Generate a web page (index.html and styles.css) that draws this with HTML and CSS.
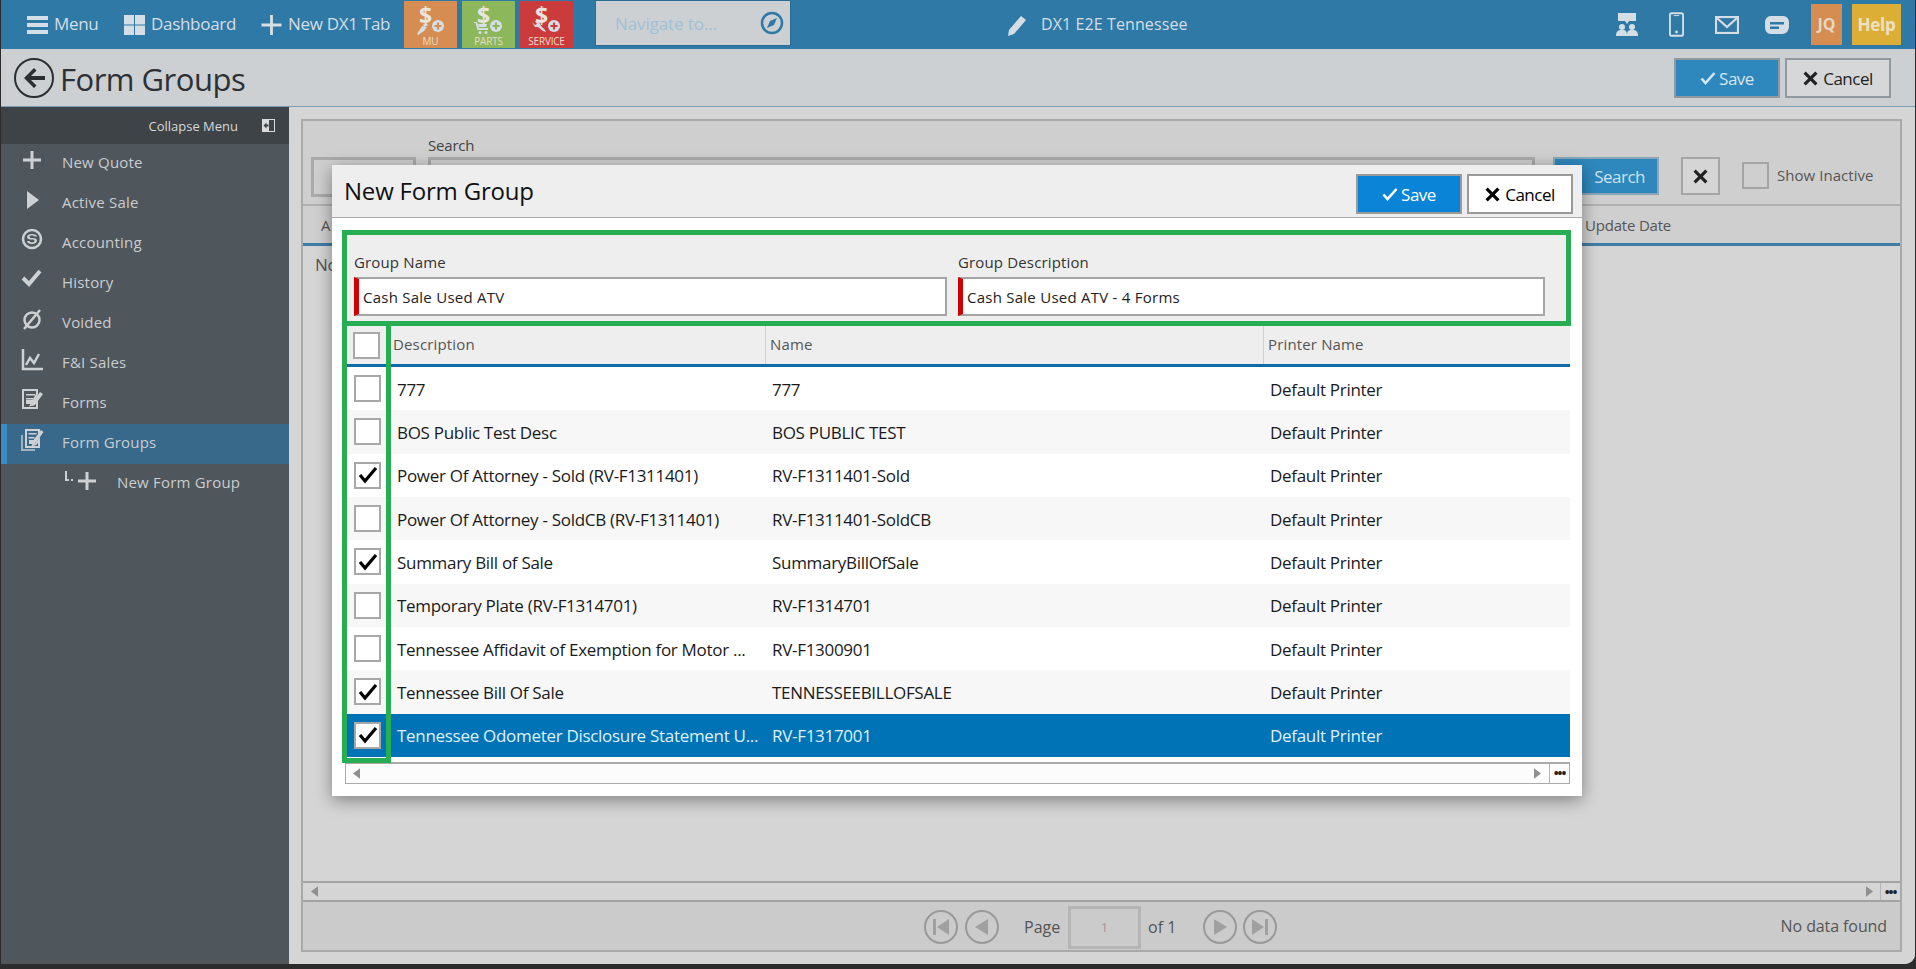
FILE: index.html
```html
<!DOCTYPE html>
<html lang="en">
<head>
<meta charset="utf-8">
<title>Form Groups</title>
<link rel="stylesheet" href="styles.css">
</head>
<body>
<div class="app">
  <header class="topbar">
    <div class="nav nav-menu"><svg class="ic21" viewBox="0 0 21 20"><path d="M0 1h21v4H0zM0 8h21v4H0zM0 15h21v4H0z"/></svg><span>Menu</span></div>
    <div class="nav nav-dash"><svg class="ic21" viewBox="0 0 21 20"><path d="M0 0h10v9.500H0zM11 0h10v9.500H11zM0 10.500h10V20H0zM11 10.500h10V20H11z"/></svg><span>Dashboard</span></div>
    <div class="nav nav-tab"><svg class="ic21" viewBox="0 0 21 21"><path d="M9 0h3v9h9v3h-9v9H9v-9H0V9h9z"/></svg><span>New DX1 Tab</span></div>
    <div class="tile tile-mu"><svg class="tile-art" viewBox="0 12 36 20"><path class="art" d="M3 26l5-8 5 1-3 4-6 4zM9 16.500l4-1 1 2-4 1z"/><circle class="art" cx="24" cy="18" r="6"/><path class="plus" d="M23 14.500h2V17h2.500v2H25v2.500h-2V19h-2.500v-2H23z"/></svg><span class="dollar">$</span><span class="tile-label">MU</span></div>
    <div class="tile tile-parts"><svg class="tile-art" viewBox="0 12 36 20"><path class="art" d="M2 14h3l2 6h9v2H5.500l-2-7H2zM6 16h9l-1 3H7z"/><circle class="art" cx="8" cy="24.500" r="1.500"/><circle class="art" cx="14" cy="24.500" r="1.500"/><circle class="art" cx="24" cy="18" r="6"/><path class="plus" d="M23 14.500h2V17h2.500v2H25v2.500h-2V19h-2.500v-2H23z"/></svg><span class="dollar">$</span><span class="tile-label">PARTS</span></div>
    <div class="tile tile-service"><svg class="tile-art" viewBox="0 12 36 20"><path class="art" d="M2 14l3 3 2-1-2-3 3 0 2 3 1 2 4 4 1 2-3-1-5-4-3 0z"/><circle class="art" cx="24" cy="18" r="6"/><path class="plus" d="M23 14.500h2V17h2.500v2H25v2.500h-2V19h-2.500v-2H23z"/></svg><span class="dollar">$</span><span class="tile-label">SERVICE</span></div>
    <div class="navto"><span class="navto-text">Navigate to...</span><svg class="compass" viewBox="0 0 24 24"><circle cx="12" cy="12" r="10" fill="none" stroke-width="2.500"/><path class="needle" d="M17 7l-3 7-7 3 3-7z"/></svg></div>
    <div class="dealer"><svg class="pencil" viewBox="0 0 22 22"><path d="M15 2l5 4L8 20l-6 2 1-6z"/></svg><span>DX1 E2E Tennessee</span></div>
    <div class="top-right">
      <svg class="ic-top" viewBox="0 0 24 24"><path d="M3 0h18v8H14l-2 3-2-3H3z"/><circle cx="7" cy="14" r="3"/><circle cx="17" cy="14" r="3"/><path d="M1 23c0-5 2-6 6-6s5 1 5 6zM12 23c0-5 1-6 5-6s6 1 6 6z"/></svg>
      <svg class="ic-phone" viewBox="0 0 16 26"><rect x="1" y="1" width="14" height="24" rx="2" fill="none" stroke-width="2"/><circle cx="8" cy="21" r="1.500"/><path d="M5 3h6v1H5z"/></svg>
      <svg class="ic-mail" viewBox="0 0 24 18"><rect x="1" y="1" width="22" height="16" fill="none" stroke-width="2"/><path d="M2 2l10 9 10-9" fill="none" stroke-width="2.500"/></svg>
      <svg class="ic-chat" viewBox="0 0 24 18"><path class="chat-body" d="M6 0h12c4 0 6 3 6 7v3c0 5-3 8-7 8H6c-4 0-6-3-6-7V7c0-4 2-7 6-7z"/><path class="chat-lines" d="M5 6h14v2.500H5zM5 10.500h9V13H5z"/></svg>
      <div class="user-tile">JQ</div>
      <div class="help-tile">Help</div>
    </div>
  </header>

  <div class="subheader">
    <svg class="back" viewBox="0 0 40 40"><circle cx="20" cy="20" r="19" fill="none" stroke="#2b2f33" stroke-width="2"/><path d="M20 10l2.500 2.500L17 18h14v4H17l5.500 5.500L20 30 10 20z" fill="#2b2f33"/></svg>
    <h1 class="page-title">Form Groups</h1>
    <div class="sub-actions">
      <button class="btn btn-save-dim"><svg class="ic-check" viewBox="0 0 16 14"><path d="M1.500 7.500l4 4.500L14.500 2" fill="none" stroke="#d5e6f1" stroke-width="2.600"/></svg>Save</button>
      <button class="btn btn-cancel-dim"><svg class="ic-x" viewBox="0 0 14 14"><path d="M1.500 1.500l11 11M12.500 1.500l-11 11" fill="none" stroke="#222" stroke-width="3"/></svg>Cancel</button>
    </div>
  </div>

  <div class="body-row">
    <aside class="sidebar">
      <div class="collapse"><span>Collapse Menu</span><svg class="collapse-ic" viewBox="0 0 13 13"><rect width="13" height="13" fill="#d8dadb"/><rect x="7" y="1" width="5" height="11" fill="#3e4347"/><path d="M1.500 6.500l3-3v2h2v2h-2v2z" fill="#3e4347"/></svg></div>
      <div class="side-item"><svg class="side-ic" viewBox="0 0 24 24"><path d="M10.500 3h3v7.500H21v3h-7.500V21h-3v-7.500H3v-3h7.500z"/></svg><span>New Quote</span></div>
      <div class="side-item"><svg class="side-ic" viewBox="0 0 24 24"><path d="M7 3l12 9-12 9z"/></svg><span>Active Sale</span></div>
      <div class="side-item"><svg class="side-ic" viewBox="0 0 24 24"><circle cx="12" cy="11" r="9" fill="none" stroke="#cdd1d3" stroke-width="2.500"/><path d="M7 9c0-2 2-3 5-3s5 1 5 2.500h-2.500c-.5-.7-1.400-1-2.500-1-1.500 0-2.500.5-2.500 1.200S10.500 10 12 10c3 0 5 .8 5 2.500S15 16 12 16s-5-1-5-3h2.500c.3.800 1.200 1.300 2.500 1.300 1.500 0 2.500-.5 2.500-1.500S13.500 11.500 12 11.500c-3 0-5-.5-5-2.500z"/></svg><span>Accounting</span></div>
      <div class="side-item"><svg class="side-ic" viewBox="0 0 24 24"><path d="M3 10l6 6L20 3" fill="none" stroke="#cdd1d3" stroke-width="4"/></svg><span>History</span></div>
      <div class="side-item"><svg class="side-ic" viewBox="0 0 24 24"><circle cx="12" cy="12" r="7.500" fill="none" stroke="#cdd1d3" stroke-width="2.500"/><path d="M4 21L20 2" stroke="#cdd1d3" stroke-width="2.500"/></svg><span>Voided</span></div>
      <div class="side-item"><svg class="side-ic" viewBox="0 0 24 24"><path d="M3 1v20h20" fill="none" stroke="#cdd1d3" stroke-width="2.500"/><path d="M6 17l4-7 4 5 5-9" fill="none" stroke="#cdd1d3" stroke-width="2.500"/></svg><span>F&amp;I Sales</span></div>
      <div class="side-item"><svg class="side-ic" viewBox="0 0 24 24"><path d="M3 2h14v4l-4 7H7v2h5l-1 2 3-1 3-5v9H3z" fill="none" stroke="#cdd1d3" stroke-width="2"/><path d="M6 6h9v1.500H6zM6 10h7v1.500H6zM6 14h5v1.500H6zM20 4l3 2-8 11-3 1 0-3z"/></svg><span>Forms</span></div>
      <div class="side-item side-active"><svg class="side-ic" viewBox="0 0 24 24"><path d="M1 7h2v14h12v2H1z" opacity=".7"/><path d="M6 2h13v5l-4 6h-5v2h4l-1 2 3-1 3-4v7H6z" fill="none" stroke="#cdd1d3" stroke-width="2"/><path d="M8.500 5h8v1.500h-8zM8.500 9h6v1.500h-6zM21 2l2.500 2-7 10-3 1 0-3z"/></svg><span>Form Groups</span></div>
      <div class="side-item side-sub"><svg class="sub-l" viewBox="0 0 8 10"><path d="M0 0h2v8h2v2H0zM6 8h2v2H6z"/></svg><svg class="sub-plus" viewBox="0 0 18 18"><path d="M7.500 0h3v7.500H18v3h-7.500V18h-3v-7.500H0v-3h7.500z"/></svg><span>New Form Group</span></div>
    </aside>

    <main class="main">
      <section class="panel">
        <div class="toolbar">
          <div class="combo"></div>
          <div class="search-field"><label class="search-label">Search</label><div class="search-input"></div></div>
          <button class="search-btn">Search</button>
          <button class="clear-btn"><svg class="ic-x" viewBox="0 0 14 14"><path d="M1.500 1.500l11 11M12.500 1.500l-11 11" fill="none" stroke="#222" stroke-width="3"/></svg></button>
          <div class="inactive"><span class="inactive-box"></span><span>Show Inactive</span></div>
        </div>
        <div class="panel-head"><span>A</span><span class="update-date">Update Date</span></div>
        <div class="panel-content"><span>No</span></div>
        <div class="panel-scroll">
          <svg class="arrow" viewBox="0 0 8 12"><path d="M8 0v12L0 6z"/></svg>
          <svg class="arrow arrow-r" viewBox="0 0 8 12"><path d="M0 0v12l8-6z"/></svg>
          <span class="more">&#8226;&#8226;&#8226;</span>
        </div>
        <div class="pager">
          <div class="pager-mid">
            <svg class="pg" viewBox="0 0 34 34"><circle cx="17" cy="17" r="16"/><path class="pg-fill" d="M9 9h3v16H9zM25 9v16L13 17z"/></svg>
            <svg class="pg pg-prev" viewBox="0 0 34 34"><circle cx="17" cy="17" r="16"/><path class="pg-fill" d="M23 9v16L10 17z"/></svg>
            <span class="pg-page">Page</span>
            <span class="pg-input">1</span>
            <span class="pg-of">of 1</span>
            <svg class="pg pg-next" viewBox="0 0 34 34"><circle cx="17" cy="17" r="16"/><path class="pg-fill" d="M11 9v16l13-8z"/></svg>
            <svg class="pg pg-last" viewBox="0 0 34 34"><circle cx="17" cy="17" r="16"/><path class="pg-fill" d="M9 9v16l12-8zM22 9h3v16h-3z"/></svg>
          </div>
          <span class="pg-status">No data found</span>
        </div>
      </section>
    </main>
  </div>

  <div class="modal">
    <div class="modal-head">
      <h2 class="modal-title">New Form Group</h2>
      <div class="modal-actions">
        <button class="btn btn-save"><svg class="ic-check" viewBox="0 0 16 14"><path d="M1.500 7.500l4 4.500L14.500 2" fill="none" stroke="#fff" stroke-width="2.600"/></svg>Save</button>
        <button class="btn btn-cancel"><svg class="ic-x" viewBox="0 0 14 14"><path d="M1.500 1.500l11 11M12.500 1.500l-11 11" fill="none" stroke="#000" stroke-width="3"/></svg>Cancel</button>
      </div>
    </div>
    <div class="modal-body">
      <div class="form-box">
        <div class="field field-name"><label class="field-label">Group Name</label><div class="field-input">Cash Sale Used ATV</div></div>
        <div class="field field-desc"><label class="field-label">Group Description</label><div class="field-input">Cash Sale Used ATV - 4 Forms</div></div>
      </div>
      <div class="grid">
        <div class="grid-head">
          <div class="cell-check"><span class="box box-head"></span></div>
          <div class="head-cell">Description</div>
          <div class="head-cell">Name</div>
          <div class="head-cell head-last">Printer Name</div>
        </div>
        <div class="grid-row"><div class="cell-check"><span class="box"></span></div><div class="cell">777</div><div class="cell">777</div><div class="cell">Default Printer</div></div>
        <div class="grid-row alt"><div class="cell-check"><span class="box"></span></div><div class="cell">BOS Public Test Desc</div><div class="cell">BOS PUBLIC TEST</div><div class="cell">Default Printer</div></div>
        <div class="grid-row"><div class="cell-check"><span class="box"><svg class="tick" viewBox="0 0 20 18"><path d="M2 9l5 6L18 2" fill="none" stroke="#000" stroke-width="3.200"/></svg></span></div><div class="cell">Power Of Attorney - Sold (RV-F1311401)</div><div class="cell">RV-F1311401-Sold</div><div class="cell">Default Printer</div></div>
        <div class="grid-row alt"><div class="cell-check"><span class="box"></span></div><div class="cell">Power Of Attorney - SoldCB (RV-F1311401)</div><div class="cell">RV-F1311401-SoldCB</div><div class="cell">Default Printer</div></div>
        <div class="grid-row"><div class="cell-check"><span class="box"><svg class="tick" viewBox="0 0 20 18"><path d="M2 9l5 6L18 2" fill="none" stroke="#000" stroke-width="3.200"/></svg></span></div><div class="cell">Summary Bill of Sale</div><div class="cell">SummaryBillOfSale</div><div class="cell">Default Printer</div></div>
        <div class="grid-row alt"><div class="cell-check"><span class="box"></span></div><div class="cell">Temporary Plate (RV-F1314701)</div><div class="cell">RV-F1314701</div><div class="cell">Default Printer</div></div>
        <div class="grid-row"><div class="cell-check"><span class="box"></span></div><div class="cell">Tennessee Affidavit of Exemption for Motor ...</div><div class="cell">RV-F1300901</div><div class="cell">Default Printer</div></div>
        <div class="grid-row alt"><div class="cell-check"><span class="box"><svg class="tick" viewBox="0 0 20 18"><path d="M2 9l5 6L18 2" fill="none" stroke="#000" stroke-width="3.200"/></svg></span></div><div class="cell">Tennessee Bill Of Sale</div><div class="cell">TENNESSEEBILLOFSALE</div><div class="cell">Default Printer</div></div>
        <div class="grid-row selected"><div class="cell-check"><span class="box"><svg class="tick" viewBox="0 0 20 18"><path d="M2 9l5 6L18 2" fill="none" stroke="#000" stroke-width="3.200"/></svg></span></div><div class="cell">Tennessee Odometer Disclosure Statement U...</div><div class="cell">RV-F1317001</div><div class="cell">Default Printer</div></div>
        <div class="grid-scroll">
          <svg class="arrow" viewBox="0 0 8 12"><path d="M8 0v12L0 6z"/></svg>
          <svg class="arrow arrow-r" viewBox="0 0 8 12"><path d="M0 0v12l8-6z"/></svg>
          <span class="more">&#8226;&#8226;&#8226;</span>
        </div>
      </div>
      <div class="green-column"></div>
    </div>
  </div>
</div>
</body>
</html>
```

FILE: styles.css
```css
* { box-sizing: border-box; }
html, body { margin: 0; padding: 0; height: 969px; overflow: hidden; }
body { background: #2c2c2c; font-family: "Open Sans", "Noto Sans", sans-serif; color: #222; }
h1, h2 { margin: 0; font-weight: 400; }
button { font-family: inherit; cursor: default; }
svg { display: block; flex: none; }

.app { position: relative; margin-left: 1px; width: 1914px; height: 964px; display: flex; flex-direction: column; overflow: hidden; border-radius: 0 0 10px 0; background: #d5d5d5; }

/* top bar */
.topbar { height: 49px; flex: none; background: #2f79a7; display: flex; align-items: center; padding-left: 26px; color: #d5dee4; font-size: 17px; letter-spacing: -0.3px; }
.topbar svg path, .topbar svg circle, .topbar svg rect { fill: #d5dee4; stroke: #d5dee4; stroke-width: 0; }
.nav { display: flex; align-items: center; gap: 6px; white-space: nowrap; }
.nav span { margin-top: -2px; }
.ic21 { width: 21px; height: 20px; }
.nav-menu { width: 97px; }
.nav-dash { width: 137px; }
.nav-tab { width: 143px; }
.tile { position: relative; width: 53px; height: 47px; margin-right: 5px; color: #e9dccb; text-align: center; }
.tile-mu { background: #d68d52; }
.tile-parts { background: #8db75b; }
.tile-service { background: #cc3b3b; margin-right: 23px; }
.dollar { position: absolute; left: 15px; top: 1px; z-index: 1; font-size: 23px; line-height: 26px; font-weight: 700; letter-spacing: 0; color: #e8e4de; }
.tile-art { position: absolute; left: 10px; top: 19px; width: 36px; height: 20px; }
.topbar .tile-art .plus { fill: #8a8a8a; }
.tile-mu .tile-art .plus { fill: #d68d52; }
.tile-parts .tile-art .plus { fill: #8db75b; }
.tile-service .tile-art .plus { fill: #cc3b3b; }
.tile-label { position: absolute; left: 0; right: 0; bottom: 0; font-size: 10px; line-height: 13px; letter-spacing: -0.2px; }

.navto { width: 194px; height: 44px; margin-top: -3px; background: #ccd0d3; display: flex; align-items: center; justify-content: space-between; padding: 0 6px 0 19px; box-shadow: 0 0 0 1px #2a6a93; }
.navto-text { color: #a0c0d7; font-size: 17px; letter-spacing: -0.1px; }
.topbar .compass { width: 24px; height: 24px; }
.topbar .compass circle { fill: none; stroke: #2f79a7; stroke-width: 2.500; }
.topbar .compass .needle { fill: #2f79a7; }

.dealer { margin-left: 216px; display: flex; align-items: center; gap: 13px; font-size: 16px; letter-spacing: 0.1px; white-space: nowrap; }
.dealer span { margin-top: -2px; }
.pencil { width: 22px; height: 22px; }
.top-right { margin-left: auto; display: flex; align-items: center; padding-right: 14px; }
.ic-top { width: 24px; height: 24px; margin-right: 30px; }
.ic-phone { width: 15px; height: 25px; margin-right: 31px; }
.topbar .ic-phone rect { fill: none; stroke-width: 2; }
.ic-mail { width: 24px; height: 18px; margin-right: 26px; }
.topbar .ic-mail rect, .topbar .ic-mail path { fill: none; stroke-width: 2.200; }
.ic-chat { width: 24px; height: 18px; margin-right: 22px; }
.topbar .ic-chat .chat-lines { fill: #2f79a7; }
.user-tile { width: 31px; height: 41px; background: #d68d52; color: #e6d7c5; font-weight: 700; font-size: 16px; line-height: 41px; text-align: center; margin-right: 10px; letter-spacing: 0; }
.help-tile { width: 49px; height: 41px; background: #dcae36; color: #ece2c3; font-weight: 700; font-size: 17px; line-height: 41px; text-align: center; letter-spacing: -0.2px; }

/* sub header */
.subheader { height: 58px; flex: none; background: #ccd0d3; border-bottom: 1px solid #7d9db4; display: flex; align-items: center; padding-left: 13px; padding-right: 24px; }
.back { width: 40px; height: 40px; margin-right: 6px; }
.page-title { font-size: 31px; color: #2d3135; letter-spacing: -0.5px; margin-top: 2px; }
.sub-actions { margin-left: auto; display: flex; gap: 5px; margin-top: 1px; }
.btn { width: 106px; height: 40px; border-width: 2px; border-style: solid; display: flex; align-items: center; justify-content: center; gap: 3px; font-size: 17px; letter-spacing: -0.5px; padding: 0; }
.ic-check { width: 16px; height: 14px; }
.ic-x { width: 15px; height: 15px; margin-right: 2px; }
.btn-save-dim { background: #2e87bd; border-color: #8f999f; color: #d5e6f1; }
.btn-cancel-dim { background: #d5d7d8; border-color: #8f999f; color: #222; }
.btn-save { background: #0a84d6; border-color: #9a9a9a; color: #fff; }
.btn-cancel { background: #fff; border-color: #9a9a9a; color: #000; }

/* sidebar */
.body-row { flex: 1; display: flex; min-height: 0; }
.sidebar { width: 288px; flex: none; background: #4f565c; color: #c9cdcf; font-size: 15px; letter-spacing: 0.2px; }
.collapse { height: 37px; background: #3e4347; display: flex; align-items: center; justify-content: flex-end; gap: 24px; padding-right: 14px; font-size: 13px; color: #d5d8da; letter-spacing: 0; }
.collapse-ic { width: 13px; height: 13px; }
.side-item { height: 40px; display: flex; align-items: center; padding: 0 0 4px 19px; gap: 18px; }
.side-ic { width: 24px; height: 24px; margin-top: -4px; fill: #cdd1d3; }
.side-active { background: #38688a; box-shadow: inset 6px 0 0 #3a8cc4; }
.side-sub { padding-left: 64px; gap: 0; }
.sub-l { width: 8px; height: 10px; margin: -12px 5px 0 0; fill: #cdd1d3; }
.sub-plus { width: 18px; height: 18px; margin: -2px 21px 0 0; fill: #cdd1d3; }

/* main panel */
.main { flex: 1; min-width: 0; padding: 12px 13px 12px 12px; background: #d5d5d5; }
.panel { height: 100%; border: 2px solid #a9a9a9; display: flex; flex-direction: column; color: #555; font-size: 15px; letter-spacing: -0.2px; }
.toolbar { height: 85px; flex: none; border-bottom: 2px solid #b0b0b0; background: #cfcfcf; display: flex; align-items: flex-start; padding: 36px 0 0 8px; }
.combo { width: 105px; height: 40px; border: 3px solid #aaa; margin-right: 12px; }
.search-field { position: relative; width: 1107px; margin-right: 18px; }
.search-label { position: absolute; left: 0; top: -22px; font-size: 15px; color: #444; }
.search-input { height: 38px; border: 3px solid #aaa; }
.search-btn { width: 106px; height: 38px; background: #2e87bd; border: 2px solid #8aa6b8; color: #d0e2ee; font-size: 17px; letter-spacing: -0.5px; text-align: right; padding-right: 12px; margin-right: 22px; }
.clear-btn { width: 39px; height: 38px; background: #d5d5d5; border: 2px solid #a5a5a5; padding: 0; display: flex; align-items: center; justify-content: center; margin-right: 22px; }
.clear-btn .ic-x { margin: 0; }
.inactive { display: flex; align-items: center; gap: 8px; height: 28px; margin-top: 4px; color: #555; letter-spacing: 0.05px; }
.inactive-box { width: 27px; height: 27px; border: 2px solid #a5a5a5; }
.panel-head { height: 40px; flex: none; border-bottom: 3px solid #3f7ca6; display: flex; align-items: center; padding-left: 18px; background: #cfcfcf; position: relative; }
.update-date { position: absolute; left: 1282px; }
.panel-content { flex: 1; padding: 7px 0 0 12px; font-size: 17px; background: #d5d5d5; }
.panel-scroll, .grid-scroll { position: relative; display: flex; align-items: center; justify-content: space-between; }
.panel-scroll { height: 21px; flex: none; border-top: 2px solid #a3a3a3; border-bottom: 2px solid #a3a3a3; padding: 0 27px 0 8px; }
.arrow { width: 7px; height: 11px; fill: #8f8f8f; }
.more { position: absolute; right: 0; top: 0; bottom: 0; width: 20px; display: flex; align-items: center; justify-content: center; border-left: 1px solid #b5b5b5; font-size: 13px; font-weight: 700; letter-spacing: -1px; color: #222; }
.pager { height: 48px; flex: none; background: #cbcbcb; display: flex; align-items: center; position: relative; justify-content: flex-end; padding-right: 13px; }
.pager-mid { position: absolute; left: 621px; top: 0; height: 50px; display: flex; align-items: center; font-size: 16px; letter-spacing: 0; }
.pg { width: 34px; height: 34px; }
.pg circle { fill: none; stroke: #999; stroke-width: 2; }
.pg .pg-fill { fill: #a0a0a0; }
.pg-prev { margin-left: 7px; }
.pg-page { margin-left: 25px; width: 44px; }
.pg-input { width: 73px; height: 43px; border: 3px solid #b5b5b5; margin-right: 7px; color: #999; font-size: 13px; text-align: center; line-height: 37px; }
.pg-of { width: 37px; }
.pg-next { margin-left: 18px; }
.pg-last { margin-left: 6px; }
.pg-status { color: #555; font-size: 16px; letter-spacing: -0.1px; }

/* modal */
.modal { position: absolute; left: 331px; top: 165px; width: 1250px; height: 631px; background: #fff; box-shadow: 0 4px 16px rgba(0, 0, 0, 0.4); display: flex; flex-direction: column; }
.modal-head { height: 53px; flex: none; background: #eee; border-bottom: 1px solid #aaa; display: flex; align-items: center; padding: 0 9px 0 12px; }
.modal-title { font-size: 24px; color: #111; letter-spacing: -0.2px; margin-top: -2px; }
.modal-actions { margin-left: auto; display: flex; gap: 5px; margin-top: 6px; }
.modal-body { position: relative; flex: 1; padding: 12px 11px 0 10px; }
.form-box { height: 96px; border: 5px solid #27ae52; background: #eee; display: flex; gap: 11px; padding: 17px 0 0 7px; }
.field { display: flex; flex-direction: column; gap: 5px; }
.field-name { width: 593px; }
.field-desc { width: 587px; }
.field-label { font-size: 15px; line-height: 20px; color: #333; letter-spacing: 0.15px; }
.field-input { height: 39px; background: #fff; border: 2px solid #a5a5a5; border-left: 5px solid #d10000; padding-left: 4px; font-size: 15px; line-height: 36px; color: #222; letter-spacing: 0.25px; }
.grid { margin-left: 5px; width: 1223px; margin-top: 0; }
.grid-head, .grid-row { display: grid; grid-template-columns: 44px 375px 498px 1fr; align-items: center; }
.grid-head { height: 41px; background: #eee; border-bottom: 3px solid #0f6aa8; }
.grid-row { height: 43.33px; background: #fff; font-size: 17px; color: #1a1a1a; letter-spacing: -0.3px; }
.grid-row.alt { background: #f7f7f7; }
.grid-row.selected { background: #0073b7; color: #dff1fb; }
.cell-check { display: flex; justify-content: center; align-items: center; padding-right: 3px; }
.box { width: 27px; height: 27px; background: #fff; border: 2px solid #a8a8a8; display: flex; align-items: center; justify-content: center; }
.box-head { margin-left: -2px; }
.tick { width: 20px; height: 18px; }
.head-cell { height: 100%; display: flex; align-items: center; padding-left: 2px; padding-bottom: 3px; font-size: 15px; color: #555; border-right: 1px solid #d0d0d0; letter-spacing: 0.15px; }
.head-last { border-right: 0; padding-left: 4px; }
.head-cell:nth-child(3) { padding-left: 4px; }
.cell { padding: 1px 0 0 6px; white-space: nowrap; overflow: hidden; }
.grid-scroll { height: 22px; margin-top: 5px; margin-left: -2px; background: #fcfcfc; border: 1px solid #aaa; border-top: 2px solid #aaa; padding: 0 28px 0 7px; }
.green-column { position: absolute; left: 10px; top: 107px; width: 49px; height: 438px; border: 5px solid #27ae52; border-top-width: 1px; }
```
